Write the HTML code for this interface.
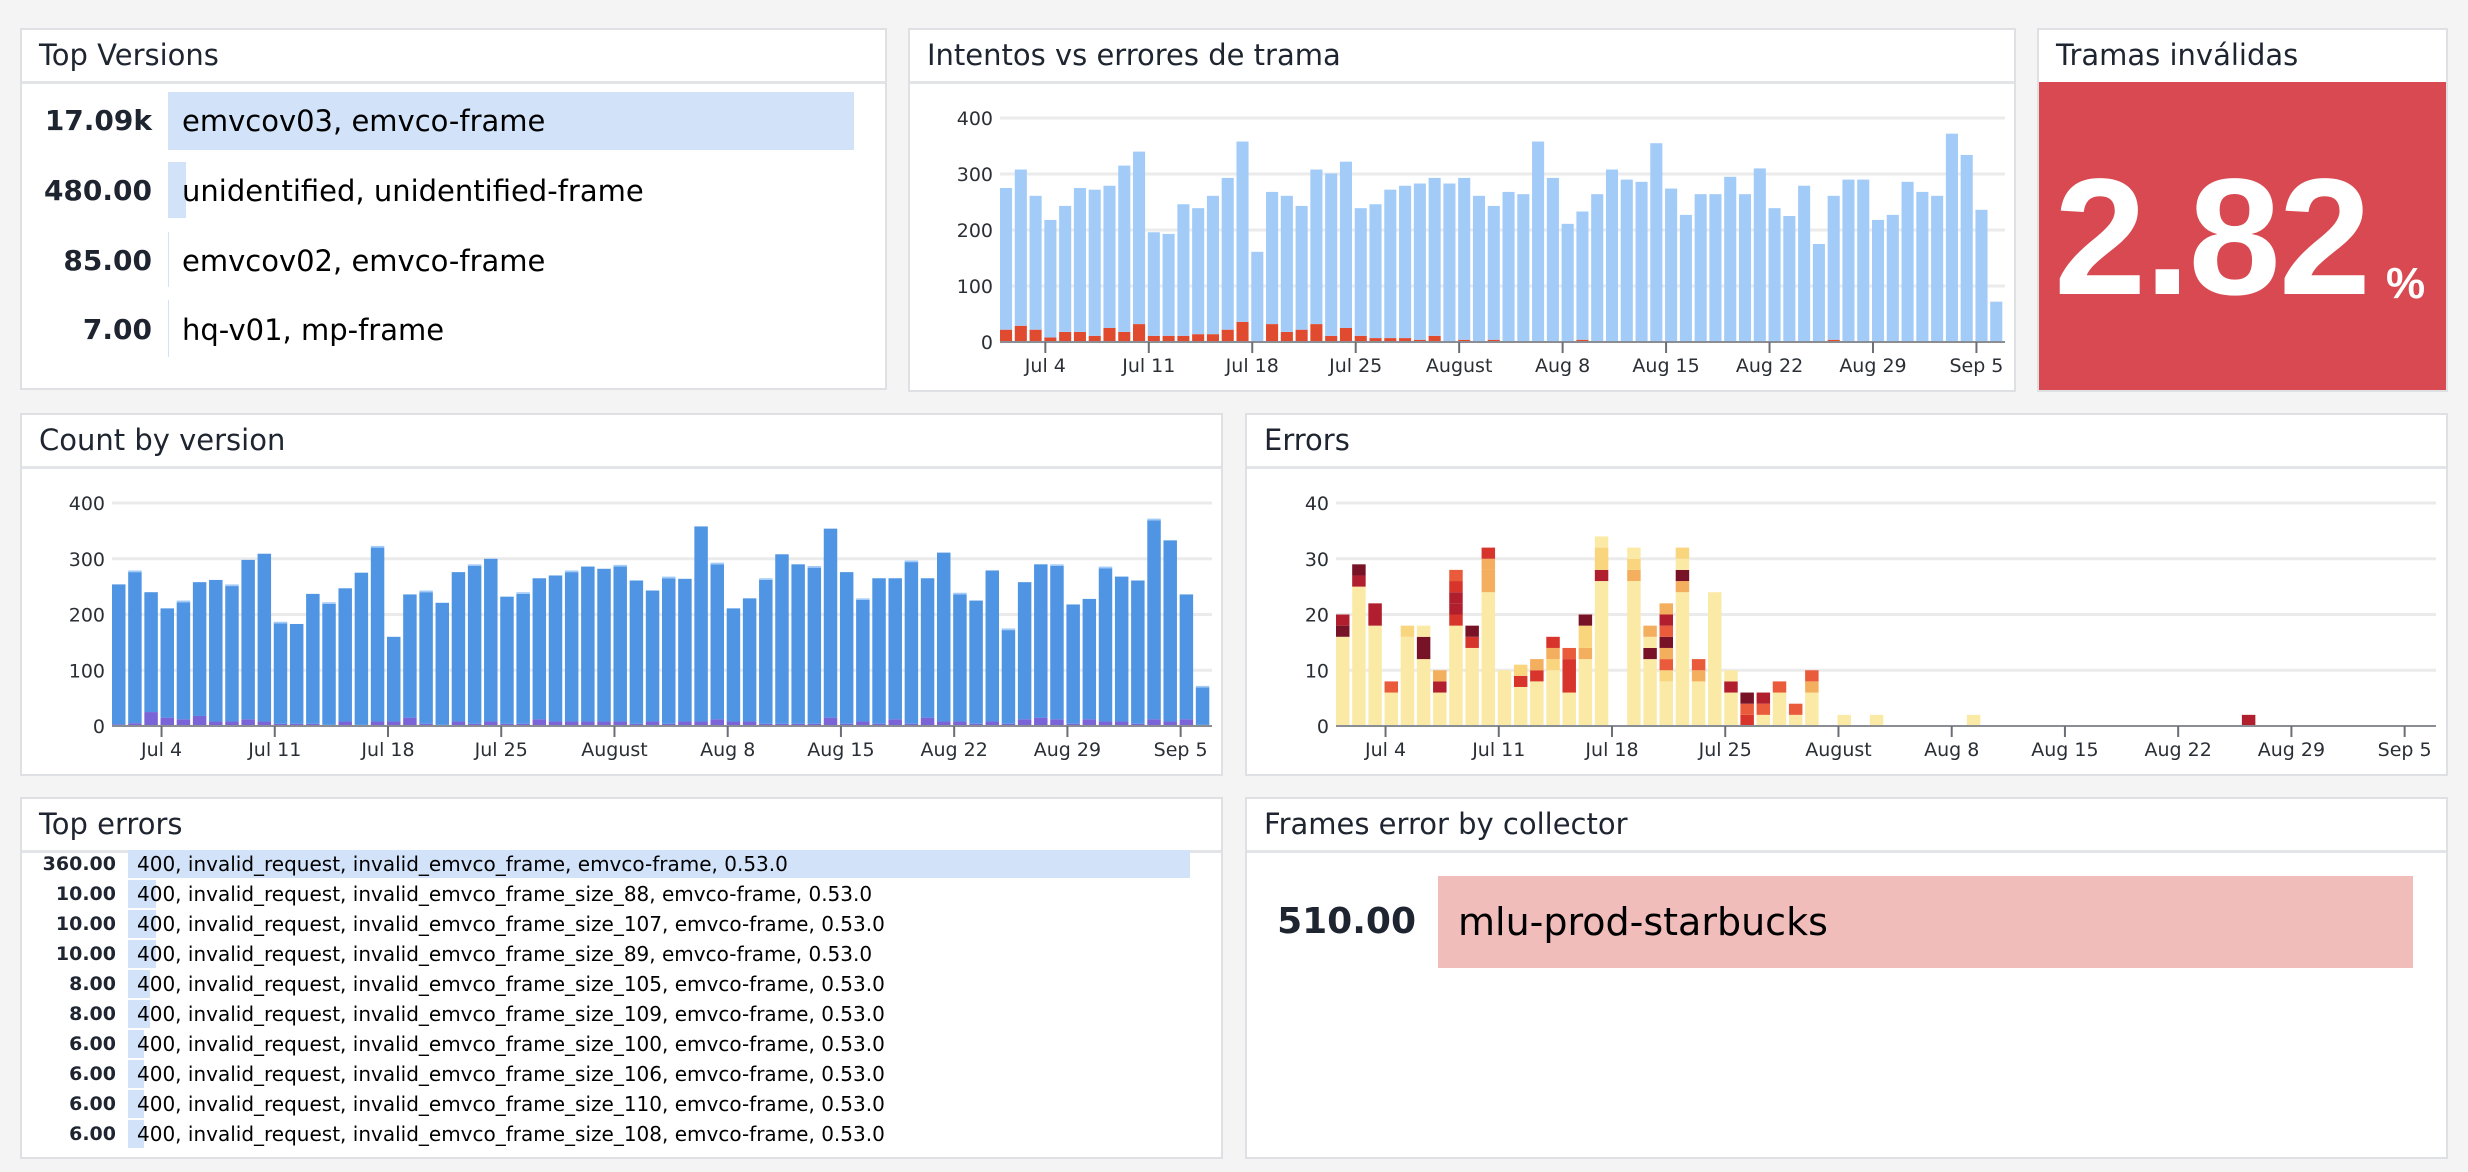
<!DOCTYPE html>
<html><head><meta charset="utf-8">
<style>
html,body{margin:0;padding:0}
body{width:2468px;height:1172px;background:#f4f4f4;position:relative;overflow:hidden;font-family:"DejaVu Sans","Liberation Sans",sans-serif;color:#1e2530}
.p{position:absolute;background:#fff;border:2px solid #dfe0e4;box-sizing:border-box}
.h{height:51px;border-bottom:3px solid #e3e4e8;box-sizing:content-box;font-size:29px;line-height:51px;padding-left:17px;color:#1e2530;white-space:nowrap}
.abs{position:absolute;white-space:nowrap}
svg text{font-family:"DejaVu Sans","Liberation Sans",sans-serif}
</style></head><body>

<div class="p" style="left:20px;top:28px;width:867px;height:362px"><div class="h">Top Versions</div></div>
<div class="p" style="left:908px;top:28px;width:1108px;height:364px"><div class="h">Intentos vs errores de trama</div></div>
<div class="p" style="left:2037px;top:28px;width:411px;height:364px"><div class="h" style="border-bottom:none;height:52px">Tramas inválidas</div>
<div style="position:absolute;left:0;top:52px;right:0;bottom:0;background:#d94951"></div></div>
<div class="p" style="left:20px;top:413px;width:1203px;height:363px"><div class="h">Count by version</div></div>
<div class="p" style="left:1245px;top:413px;width:1203px;height:363px"><div class="h">Errors</div></div>
<div class="p" style="left:20px;top:797px;width:1203px;height:362px"><div class="h">Top errors</div></div>
<div class="p" style="left:1245px;top:797px;width:1203px;height:362px"><div class="h">Frames error by collector</div></div>

<!-- Top versions -->
<div class="abs" style="left:168px;top:92px;width:686px;height:58px;background:#d1e2f9"></div>
<div class="abs" style="left:168px;top:162px;width:18px;height:56px;background:#d1e2f9"></div>
<div class="abs" style="left:168px;top:232px;width:1px;height:55px;background:#d1e2f9"></div>
<div class="abs" style="left:168px;top:300px;width:1px;height:57px;background:#d1e2f9"></div>
<div class="abs" style="left:0;width:152px;top:100px;text-align:right;font-size:28px;font-weight:bold;line-height:42px">17.09k</div>
<div class="abs" style="left:0;width:152px;top:170px;text-align:right;font-size:28px;font-weight:bold;line-height:42px">480.00</div>
<div class="abs" style="left:0;width:152px;top:240px;text-align:right;font-size:28px;font-weight:bold;line-height:42px">85.00</div>
<div class="abs" style="left:0;width:152px;top:309px;text-align:right;font-size:28px;font-weight:bold;line-height:42px">7.00</div>
<div class="abs" style="left:182px;top:100px;font-size:29px;line-height:42px;color:#000">emvcov03, emvco-frame</div>
<div class="abs" style="left:182px;top:170px;font-size:29px;line-height:42px;color:#000">unidentified, unidentified-frame</div>
<div class="abs" style="left:182px;top:240px;font-size:29px;line-height:42px;color:#000">emvcov02, emvco-frame</div>
<div class="abs" style="left:182px;top:309px;font-size:29px;line-height:42px;color:#000">hq-v01, mp-frame</div>

<!-- Tramas -->
<div class="abs" style="left:2054px;top:155px;font-family:'Liberation Sans',sans-serif;font-size:166px;font-weight:bold;color:#fff;line-height:166px;letter-spacing:-2px">2.82</div>
<div class="abs" style="left:2386px;top:262px;font-family:'Liberation Sans',sans-serif;font-size:44px;font-weight:bold;color:#fff;line-height:44px">%</div>

<!-- Top errors -->
<div id="te"></div>

<!-- Frames -->
<div class="abs" style="left:1438px;top:876px;width:975px;height:92px;background:#f0bdbb"></div>
<div class="abs" style="left:1250px;width:166px;top:898px;text-align:right;font-size:36px;font-weight:bold;line-height:48px">510.00</div>
<div class="abs" style="left:1458px;top:898px;font-size:38px;line-height:48px;color:#000">mlu-prod-starbucks</div>

<svg id="c" width="2468" height="1172" style="position:absolute;left:0;top:0"></svg>

<script>
var NS="http://www.w3.org/2000/svg",S=document.getElementById('c');
function el(t,a,txt){var e=document.createElementNS(NS,t);for(var k in a)e.setAttribute(k,a[k]);if(txt!=null)e.textContent=txt;S.appendChild(e);return e;}
var labels=["Jul 4","Jul 11","Jul 18","Jul 25","August","Aug 8","Aug 15","Aug 22","Aug 29","Sep 5"];
function axes(x0,x1,yT,y0,max,step){
  var n=max/step;
  for(var i=0;i<=n;i++){var y=y0-(y0-yT)*i/n;
    if(i>0)el('line',{x1:x0,x2:x1,y1:y,y2:y,stroke:'#ebebeb','stroke-width':3});
    el('text',{x:x0-7,y:y+7,'text-anchor':'end','font-size':19,fill:'#2a2f36'},String(i*step));}
}
function xaxis(x0,x1,y0,pitch){
  el('line',{x1:x0,x2:x1,y1:y0,y2:y0,stroke:'#8a8e94','stroke-width':2});
  for(var j=0;j<10;j++){var x=x0+pitch*(3+7*j)+1;
    el('line',{x1:x,x2:x,y1:y0,y2:y0+11,stroke:'#6b6f75','stroke-width':2});
    el('text',{x:x,y:y0+30,'text-anchor':'middle','font-size':19,fill:'#2a2f36'},labels[j]);}
}
function bars(x0,x1,yT,y0,max,segs){
  var n=segs.length,p=(x1-x0)/n,w=p-2.7,sc=(y0-yT)/max;
  for(var i=0;i<n;i++){var y=y0;
    for(var k=0;k<segs[i].length;k++){var v=segs[i][k][0],h=v*sc;y-=h;
      el('rect',{x:x0+i*p,y:y,width:w,height:h,fill:segs[i][k][1]});}}
  return p;
}
var A=[275,308,261,218,243,275,272,279,315,340,196,193,246,239,261,293,358,161,268,261,243,308,301,322,239,246,272,279,283,293,283,293,261,243,268,264,358,293,211,233,264,308,290,286,355,274,227,264,264,295,264,310,239,225,279,175,261,290,290,218,227,286,268,261,372,334,236,72];
var R=[22,29,22,8,18,18,11,25,18,32,11,11,11,14,14,22,36,0,32,18,22,32,11,25,11,7,7,7,4,11,0,4,0,4,0,0,0,0,0,4,0,0,0,0,0,0,0,0,0,0,0,0,0,0,0,0,4,0,0,0,0,0,0,0,0,0,0,0];
axes(1000,2005,118,342,400,100);
var sg=A.map(function(v,i){return [[R[i],'#e04a2f'],[v-R[i],'#a3cbf8']];});
var p=bars(1000,2005,118,342,400,sg);xaxis(1000,2005,342,p);
var B=[254,279,240,211,225,258,262,254,298,309,187,183,237,222,247,275,323,160,236,243,221,276,290,300,232,240,265,270,279,286,282,289,261,243,268,264,358,293,211,229,265,308,290,287,354,276,229,265,265,297,265,311,239,225,279,175,258,290,290,218,228,286,268,261,372,333,236,72];
var Pp=[3,5,25,15,12,18,8,8,12,8,4,4,4,2,8,2,8,8,15,4,2,8,4,8,4,4,12,8,8,8,8,8,4,8,4,8,8,12,8,8,4,4,4,4,15,4,8,4,12,4,15,8,8,4,8,4,12,15,12,4,12,8,8,4,12,8,12,2];
axes(112,1212,503,726,400,100);
var sg2=B.map(function(v,i){var t=(i%3==1)?3:0;return [[Pp[i],'#7b63d8'],[v-Pp[i]-t,'#4f95e3'],[t,'#a3cbf8']];});
p=bars(112,1212,503,726,400,sg2);xaxis(112,1212,726,p);
var Y='#fbeaa6',Y2='#f9d57e',O='#f3ae5e',OR='#ea5b3b',RR='#d7352b',C='#b11f2e',D='#781327';
var E=[[[16,Y],[2,D],[2,C]],[[25,Y],[2,C],[2,D]],[[18,Y],[4,C]],[[6,Y],[2,OR]],[[16,Y],[2,Y2]],[[12,Y],[4,D],[2,Y]],[[6,Y],[2,C],[2,O]],[[18,Y],[2,RR],[2,C],[2,C],[2,RR],[2,OR]],[[14,Y],[2,RR],[2,D]],[[24,Y],[4,O],[2,O],[2,RR]],[[10,Y]],[[7,Y],[2,RR],[2,Y2]],[[8,Y],[2,RR],[2,O]],[[10,Y],[2,Y2],[2,O],[2,RR]],[[6,Y],[6,RR],[2,OR]],[[12,Y],[2,O],[4,Y2],[2,D]],[[26,Y],[2,C],[4,Y2],[2,Y]],[],[[26,Y],[2,O],[2,Y2],[2,Y]],[[12,Y],[2,D],[2,Y],[2,O]],[[8,Y],[2,Y2],[2,OR],[2,O],[2,D],[2,OR],[2,C],[2,O]],[[24,Y],[2,O],[2,D],[2,Y],[2,Y2]],[[8,Y],[2,O],[2,OR]],[[24,Y]],[[6,Y],[2,C],[2,Y]],[[2,RR],[2,OR],[2,D]],[[2,Y],[2,OR],[2,C]],[[6,Y],[2,OR]],[[2,Y],[2,OR]],[[6,Y],[2,O],[2,OR]]];
while(E.length<68)E.push([]);
E[31]=[[2,Y]];E[33]=[[2,Y]];E[39]=[[2,Y]];E[56]=[[2,C]];
axes(1336,2436,503,726,40,10);
p=bars(1336,2436,503,726,40,E);xaxis(1336,2436,726,p);
var te=document.getElementById('te');
var rows=[["360.00","400, invalid_request, invalid_emvco_frame, emvco-frame, 0.53.0",1062],["10.00","400, invalid_request, invalid_emvco_frame_size_88, emvco-frame, 0.53.0",28],["10.00","400, invalid_request, invalid_emvco_frame_size_107, emvco-frame, 0.53.0",28],["10.00","400, invalid_request, invalid_emvco_frame_size_89, emvco-frame, 0.53.0",28],["8.00","400, invalid_request, invalid_emvco_frame_size_105, emvco-frame, 0.53.0",22],["8.00","400, invalid_request, invalid_emvco_frame_size_109, emvco-frame, 0.53.0",22],["6.00","400, invalid_request, invalid_emvco_frame_size_100, emvco-frame, 0.53.0",16],["6.00","400, invalid_request, invalid_emvco_frame_size_106, emvco-frame, 0.53.0",16],["6.00","400, invalid_request, invalid_emvco_frame_size_110, emvco-frame, 0.53.0",16],["6.00","400, invalid_request, invalid_emvco_frame_size_108, emvco-frame, 0.53.0",16]];
var h='';
rows.forEach(function(r,i){var t=850+i*30;
h+='<div class="abs" style="left:128px;top:'+t+'px;width:'+r[2]+'px;height:28px;background:#d1e2f9"></div>';
h+='<div class="abs" style="left:0;width:116px;top:'+t+'px;text-align:right;font-size:19px;font-weight:bold;line-height:28px">'+r[0]+'</div>';
h+='<div class="abs" style="left:137px;top:'+t+'px;font-size:20px;line-height:28px;color:#000">'+r[1]+'</div>';});
te.innerHTML=h;
</script>
</body></html>
